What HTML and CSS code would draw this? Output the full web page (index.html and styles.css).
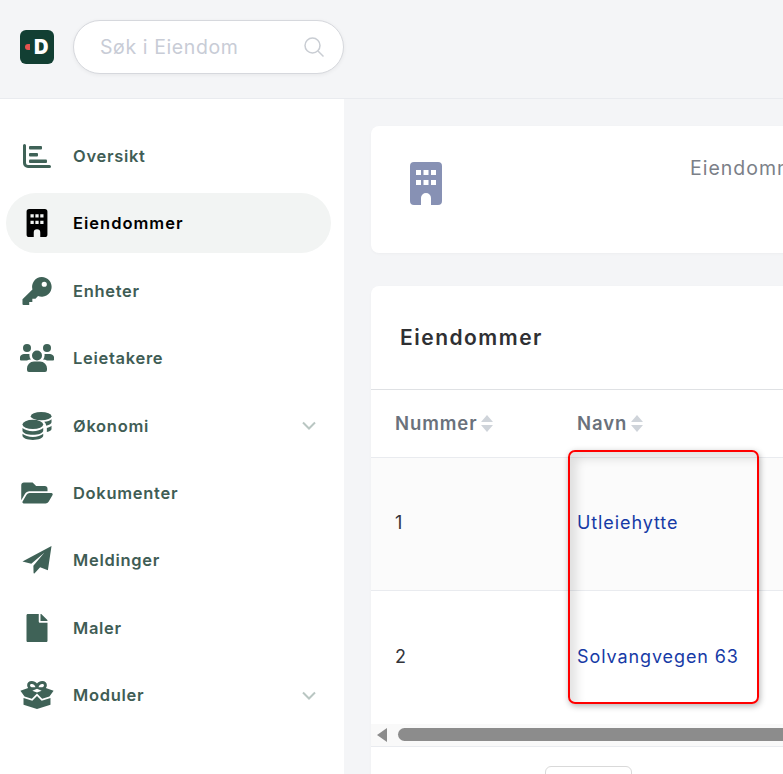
FILE: index.html
```html
<!DOCTYPE html>
<html lang="en">
<head>
    <meta charset="UTF-8">
    <meta name="viewport" content="width=device-width, initial-scale=1.0">
    <title>Eiendommer</title>
    <link rel="stylesheet" href="styles.css">
</head>
<body>
    <header class="topbar">
        <div class="logo"><span class="logo-dot"></span><span class="logo-letter">D</span></div>
        <div class="search">
            <input class="search-input" type="text" placeholder="Søk i Eiendom">
            <svg class="search-icon" viewBox="0 0 20 20"><circle cx="8.5" cy="8.5" r="7.5"/><path d="M14 14l5.5 5.5"/></svg>
        </div>
    </header>

    <div class="layout">
        <nav class="sidebar">
            <a class="nav-item">
                <svg class="nav-icon" viewBox="-3 -2 34 28"><path d="M0 1.5a1.5 1.5 0 0 1 3 0V19a2 2 0 0 0 2 2h21.5a1.5 1.5 0 0 1 0 3H5a5 5 0 0 1-5-5z"/><rect x="6" y="2" width="13" height="3.6" rx="1"/><rect x="6" y="9" width="9" height="3.6" rx="1"/><rect x="6" y="15.5" width="18" height="3.6" rx="1"/></svg>
                <span class="nav-label">Oversikt</span>
            </a>
            <a class="nav-item active">
                <svg class="nav-icon" viewBox="0 0 32 43"><path fill-rule="evenodd" d="M4 0h24a4 4 0 0 1 4 4v35a4 4 0 0 1-4 4h-7v-7a5 5 0 0 0-10 0v7H4a4 4 0 0 1-4-4V4a4 4 0 0 1 4-4zM6 8v5h5V8zm7.5 0v5h5V8zM21 8v5h5V8zM6 18v5h5v-5zm7.5 0v5h5v-5zM21 18v5h5v-5z"/></svg>
                <span class="nav-label">Eiendommer</span>
            </a>
            <a class="nav-item">
                <svg class="nav-icon" viewBox="0 0 28 27"><path fill-rule="evenodd" d="M18.5 0A9.5 9.5 0 1 1 15 18.3L12.5 21H9.5v3H6.5v3H1a1 1 0 0 1-1-1v-4.5L9.6 12A9.5 9.5 0 0 1 18.5 0zm2.5 4.5a2.5 2.5 0 1 0 0 5 2.5 2.5 0 0 0 0-5z"/></svg>
                <span class="nav-label">Enheter</span>
            </a>
            <a class="nav-item">
                <svg class="nav-icon" viewBox="0 0 34 28"><circle cx="7" cy="4" r="4"/><circle cx="27" cy="4" r="4"/><circle cx="17" cy="11.5" r="5"/><path d="M0 15a4 4 0 0 1 4-5h5.500a7 7 0 0 0 1.500 5.500A8 8 0 0 0 7 16.500H1a1 1 0 0 1-1-1.500zM34 15a4 4 0 0 0-4-5h-5.500a7 7 0 0 1-1.500 5.500 8 8 0 0 1 4 1h6a1 1 0 0 0 1-1.500zM7 25a7 7 0 0 1 7-7.500h6a7 7 0 0 1 7 7.500v1a2 2 0 0 1-2 2H9a2 2 0 0 1-2-2z"/></svg>
                <span class="nav-label">Leietakere</span>
            </a>
            <a class="nav-item">
                <svg class="nav-icon" viewBox="0 0 28 27"><ellipse cx="18" cy="4" rx="10" ry="4"/><path d="M21 9.500c3-.3 5.500-1.200 7-2.500v3c0 1.300-2 2.500-5 3.200-.3-1.500-1-2.700-2-3.700zM23.500 15.500c2-.5 3.500-1.300 4.500-2.200v3c0 1.200-1.800 2.300-4.500 3z"/><ellipse cx="10" cy="12" rx="10" ry="4.500"/><path d="M0 15.500C2 17.500 6 18.500 10 18.500s8-1 10-3v2.500c0 2.200-4.500 4-10 4S0 20.200 0 18zM0 21c2 2 6 3 10 3s8-1 10-3v2c0 2.200-4.500 4-10 4S0 25.200 0 23z"/></svg>
                <span class="nav-label">Økonomi</span>
                <svg class="chevron" viewBox="0 0 14 9"><path d="M1 1.500l6 6 6-6"/></svg>
            </a>
            <a class="nav-item">
                <svg class="nav-icon" viewBox="0 0 576 512"><path d="M572.694 292.093L500.27 416.248A63.997 63.997 0 0 1 444.989 448H45.025c-18.523 0-30.064-20.093-20.731-36.093l72.424-124.155A64 64 0 0 1 152 256h399.964c18.523 0 30.064 20.093 20.73 36.093zM152 224h328v-48c0-26.51-21.49-48-48-48H272l-64-64H48C21.49 64 0 85.49 0 112v278.046l69.077-118.418C86.214 242.25 117.989 224 152 224z"/></svg>
                <span class="nav-label">Dokumenter</span>
            </a>
            <a class="nav-item">
                <svg class="nav-icon" viewBox="0 0 28 27"><path fill-rule="evenodd" d="M28 0L24.500 23.500 17 20.500l-5.500 6-.8-.3-.2-7.200L21 6.500 8.500 17 0 15z"/></svg>
                <span class="nav-label">Meldinger</span>
            </a>
            <a class="nav-item">
                <svg class="nav-icon" viewBox="0 0 384 512"><path d="M224 136V0H24C10.700 0 0 10.700 0 24v464c0 13.300 10.700 24 24 24h336c13.300 0 24-10.700 24-24V160H248c-13.200 0-24-10.800-24-24zm160-14.100v6.100H256V0h6.100c6.400 0 12.500 2.500 17 7l97.900 98c4.500 4.500 7 10.600 7 16.900z"/></svg>
                <span class="nav-label">Maler</span>
            </a>
            <a class="nav-item">
                <svg class="nav-icon" viewBox="0 0 32 27"><path fill-rule="evenodd" d="M11 0c2 0 4 1 5 2.500C17 1 19 0 21 0c3 0 4.500 2 4.500 4 0 1-.3 2-1 2.800L32 9.500l-4 5.500-7 2-5-5-5 5-7-2-4-5.500 7.500-2.700c-.7-.8-1-1.800-1-2.800 0-2 1.500-4 4.500-4zm0 3c-1 0-1.700.5-1.700 1.300 0 1 1 1.700 2.500 1.700h2.700c-.3-1.500-1.800-3-3.500-3zm10 0c-1.700 0-3.200 1.500-3.500 3h2.700c1.500 0 2.500-.7 2.500-1.700C22.700 3.500 22 3 21 3zM16 7.500l-4.500 1.800L16 11l4.500-1.700z"/><path d="M3 16.500l8.500 2.500 4.500-4.500 4.500 4.500 8.500-2.500V23l-13 4-13-4z"/></svg>
                <span class="nav-label">Moduler</span>
                <svg class="chevron" viewBox="0 0 14 9"><path d="M1 1.500l6 6 6-6"/></svg>
            </a>
        </nav>

        <main class="content">
            <section class="card stat-card">
                <svg class="stat-icon" viewBox="0 0 32 43"><path fill-rule="evenodd" d="M4 0h24a4 4 0 0 1 4 4v35a4 4 0 0 1-4 4h-7v-7a5 5 0 0 0-10 0v7H4a4 4 0 0 1-4-4V4a4 4 0 0 1 4-4zM6 8v5h5V8zm7.500 0v5h5V8zM21 8v5h5V8zM6 18v5h5v-5zm7.500 0v5h5v-5zM21 18v5h5v-5z"/></svg>
                <div class="stat-label">Eiendommer</div>
            </section>

            <section class="card table-card">
                <h2 class="card-title">Eiendommer</h2>
                <table class="table">
                    <thead>
                        <tr>
                            <th class="col-num"><span class="th-inner">Nummer<span class="sort"><i class="sort-up"></i><i class="sort-down"></i></span></span></th>
                            <th><span class="th-inner">Navn<span class="sort"><i class="sort-up"></i><i class="sort-down"></i></span></span></th>
                        </tr>
                    </thead>
                    <tbody>
                        <tr class="row-odd">
                            <td>1</td>
                            <td><a class="link">Utleiehytte</a></td>
                        </tr>
                        <tr class="row-last">
                            <td>2</td>
                            <td><a class="link">Solvangvegen 63</a></td>
                        </tr>
                    </tbody>
                </table>
                <div class="scrollbar">
                    <span class="scroll-arrow"></span>
                    <span class="scroll-thumb"></span>
                </div>
                <div class="card-footer">
                    <button class="page-btn"></button>
                </div>
            </section>
        </main>
    </div>

    <div class="highlight"></div>
</body>
</html>
```

FILE: styles.css
```css
* {
    margin: 0;
    padding: 0;
    box-sizing: border-box;
}

body {
    font-family: Inter, "Open Sans", sans-serif;
    background: #f4f5f7;
    height: 100vh;
    overflow: hidden;
    position: relative;
}

.topbar {
    height: 99px;
    display: flex;
    align-items: center;
    gap: 19px;
    padding: 0 0 4px 20px;
    border-bottom: 1px solid #e9ebef;
}

.logo {
    width: 34px;
    height: 34px;
    border-radius: 6px;
    background: #123f33;
    display: flex;
    align-items: center;
    gap: 4px;
    padding-left: 5px;
}

.logo-dot {
    width: 5px;
    height: 6px;
    border-radius: 3px 0 0 3px;
    background: #e4534f;
}

.logo-letter {
    color: #fff;
    font-size: 20px;
    font-weight: 900;
    line-height: 1;
}

.search {
    width: 271px;
    height: 54px;
    border: 1px solid #d6d8dd;
    border-radius: 27px;
    background: #fff;
    box-shadow: 0 1px 4px rgba(0, 0, 0, 0.06);
    display: flex;
    align-items: center;
    padding: 0 19px 0 26px;
}

.search-input {
    flex: 1;
    min-width: 0;
    border: none;
    outline: none;
    background: none;
    font-family: inherit;
    font-size: 19.5px;
    letter-spacing: 0.6px;
}

.search-input::placeholder {
    color: #c8ccd6;
    opacity: 1;
}

.search-icon {
    width: 20px;
    height: 20px;
    fill: none;
    stroke: #c9cdd3;
    stroke-width: 1.5;
}

.layout {
    display: flex;
    height: calc(100vh - 99px);
}

.sidebar {
    width: 344px;
    flex-shrink: 0;
    background: #fff;
    padding: 27px 13px 0 6px;
}

.nav-item {
    height: 60px;
    margin-bottom: 7.4px;
    border-radius: 30px;
    display: flex;
    align-items: center;
    padding-right: 15px;
    color: #3f5d55;
    font-size: 16.5px;
    font-weight: 600;
    letter-spacing: 0.7px;
}

.nav-item.active {
    background: #f2f4f3;
    color: #000;
    letter-spacing: 1px;
}

.nav-icon {
    width: 34px;
    height: 28px;
    margin-left: 14px;
    fill: #3f6257;
    flex-shrink: 0;
}

.active .nav-icon {
    fill: #000;
}

.nav-label {
    flex: 1;
    margin-left: 19px;
}

.chevron {
    width: 14px;
    height: 9px;
    fill: none;
    stroke: #b9c6c2;
    stroke-width: 2;
}

.content {
    flex: 1;
    min-width: 0;
    overflow: hidden;
    padding: 27px 0 0 27px;
}

.card {
    width: 1000px;
    background: #fff;
    border-radius: 8px;
    box-shadow: 0 1px 3px rgba(0, 0, 0, 0.03);
}

.stat-card {
    height: 127px;
    display: grid;
    grid-template-columns: 280px 1fr;
    align-items: start;
    padding: 36px 0 0 39px;
    margin-bottom: 33px;
}

.stat-icon {
    width: 32px;
    height: 43px;
    fill: #8791b4;
}

.stat-label {
    color: #7b8088;
    font-size: 19.5px;
    letter-spacing: 1px;
    margin-top: -6px;
}

.card-title {
    height: 104px;
    display: flex;
    align-items: center;
    padding-left: 29px;
    color: #2f3033;
    font-size: 21px;
    font-weight: 600;
    letter-spacing: 1.5px;
    border-bottom: 1px solid #dfe1e4;
}

.table {
    width: 100%;
    table-layout: fixed;
    border-collapse: collapse;
}

.col-num {
    width: 182px;
}

.table th {
    height: 67px;
    padding-left: 24px;
    padding-right: 0;
    text-align: left;
    color: #6a717c;
    font-size: 18.5px;
    font-weight: 600;
    letter-spacing: 0.9px;
    border-bottom: 1px solid #e9ebef;
}

.th-inner {
    display: flex;
    align-items: center;
}

.table td {
    height: 133px;
    padding-left: 24px;
    padding-bottom: 2px;
    color: #33343a;
    font-size: 18px;
    letter-spacing: 0.9px;
    border-bottom: 1px solid #e9ebef;
}

.table .row-last td {
    height: 134px;
    border-bottom: none;
}

.row-odd {
    background: #fbfbfb;
}

.link {
    color: #163aa6;
}

.sort {
    display: flex;
    flex-direction: column;
    gap: 3px;
    margin-left: 4px;
}

.sort-up,
.sort-down {
    display: block;
    width: 0;
    height: 0;
    border-left: 6px solid transparent;
    border-right: 6px solid transparent;
}

.sort-up {
    border-bottom: 7px solid #cfd4da;
}

.sort-down {
    border-top: 7px solid #cfd4da;
}

.scrollbar {
    height: 23px;
    background: #f9f9f9;
    border-bottom: 1px solid #e9ebef;
    display: flex;
    align-items: center;
    padding: 0 0 1px 6px;
    gap: 11px;
}

.scroll-arrow {
    width: 0;
    height: 0;
    border-top: 7px solid transparent;
    border-bottom: 7px solid transparent;
    border-right: 10px solid #8c8c8c;
}

.scroll-thumb {
    flex: 1;
    height: 13px;
    border-radius: 7px;
    background: #8c8c8c;
}

.card-footer {
    display: flex;
    padding: 19px 0 0 174px;
}

.page-btn {
    width: 87px;
    height: 40px;
    background: #fff;
    border: 1px solid #d9d9d9;
    border-radius: 6px;
}

.highlight {
    position: absolute;
    left: 568px;
    top: 450px;
    width: 191px;
    height: 254px;
    border: 2px solid #f00;
    border-radius: 7px;
    box-shadow: 1px 2px 6px rgba(0, 0, 0, 0.3), inset 7px 7px 10px rgba(0, 0, 0, 0.11);
}
```
